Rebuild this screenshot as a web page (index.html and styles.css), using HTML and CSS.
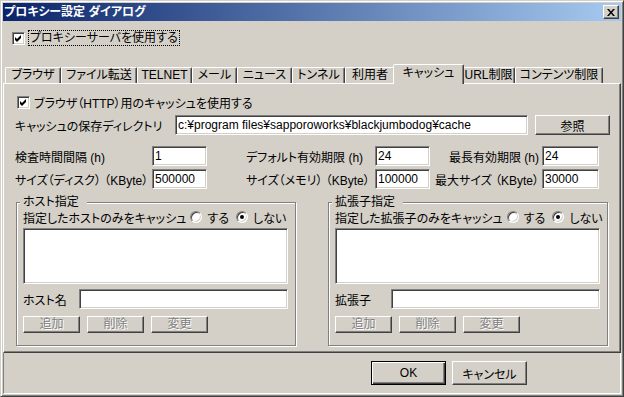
FILE: index.html
```html
<!DOCTYPE html>
<html lang="ja">
<head>
<meta charset="utf-8">
<title>プロキシー設定 ダイアログ</title>
<link rel="stylesheet" href="styles.css">
</head>
<body>
<div class="window">
    <div class="titlebar">
        <span class="title">プロキシー設定 ダイアログ</span>
        <span class="close-btn">
            <svg width="8" height="7" viewBox="0 0 8 7"><path d="M0 0h2l2 2.5L6 0h2L5 3.5 8 7H6L4 4.5 2 7H0l3-3.5z" fill="#000"/></svg>
        </span>
    </div>

    <div class="top-row">
        <span class="check"><svg width="9" height="9" viewBox="0 0 9 9"><polygon points="1,3 3,5 7,1 7,4 3,8 1,6" fill="#000"/></svg></span>
        <span class="focus-label">プロキシーサーバを使用する</span>
    </div>

    <div class="tabs">
        <div class="tab">ブラウザ</div>
        <div class="tab">ファイル転送</div>
        <div class="tab">TELNET</div>
        <div class="tab">メール</div>
        <div class="tab">ニュース</div>
        <div class="tab">トンネル</div>
        <div class="tab">利用者</div>
        <div class="tab active">キャッシュ</div>
        <div class="tab">URL制限</div>
        <div class="tab">コンテンツ制限</div>
    </div>

    <div class="panel">
        <div class="check-row">
            <span class="check"><svg width="9" height="9" viewBox="0 0 9 9"><polygon points="1,3 3,5 7,1 7,4 3,8 1,6" fill="#000"/></svg></span>
            <span>ブラウザ（HTTP）用のキャッシュを使用する</span>
        </div>

        <div class="dir-row">
            <span class="dir-label">キャッシュの保存ディレクトリ</span>
            <input class="field dir-field" type="text" value="c:¥program files¥sapporoworks¥blackjumbodog¥cache">
            <button class="btn btn-browse">参照</button>
        </div>

        <div class="params">
            <span>検査時間間隔 (h)</span>
            <input class="field" type="text" value="1">
            <span></span>
            <span>デフォルト有効期限 (h)</span>
            <input class="field" type="text" value="24">
            <span class="right">最長有効期限 (h)</span>
            <input class="field" type="text" value="24">

            <span>サイズ（ディスク） （KByte）</span>
            <input class="field" type="text" value="500000">
            <span></span>
            <span>サイズ（メモリ） （KByte）</span>
            <input class="field" type="text" value="100000">
            <span class="right">最大サイズ （KByte）</span>
            <input class="field" type="text" value="30000">
        </div>

        <div class="groups">
            <div class="group">
                <div class="group-title">ホスト指定</div>
                <div class="radio-row">
                    <span>指定したホストのみをキャッシュ</span>
                    <span class="radio-item"><span class="radio"></span>する</span>
                    <span class="radio-item"><span class="radio on"></span>しない</span>
                </div>
                <div class="listbox"></div>
                <div class="name-row">
                    <span class="name-label">ホスト名</span>
                    <input class="field name-field" type="text" value="">
                </div>
                <div class="btn-row">
                    <button class="btn small" disabled>追加</button>
                    <button class="btn small" disabled>削除</button>
                    <button class="btn small" disabled>変更</button>
                </div>
            </div>

            <div class="group">
                <div class="group-title">拡張子指定</div>
                <div class="radio-row">
                    <span>指定した拡張子のみをキャッシュ</span>
                    <span class="radio-item"><span class="radio"></span>する</span>
                    <span class="radio-item"><span class="radio on"></span>しない</span>
                </div>
                <div class="listbox"></div>
                <div class="name-row">
                    <span class="name-label">拡張子</span>
                    <input class="field name-field" type="text" value="">
                </div>
                <div class="btn-row">
                    <button class="btn small" disabled>追加</button>
                    <button class="btn small" disabled>削除</button>
                    <button class="btn small" disabled>変更</button>
                </div>
            </div>
        </div>
    </div>

    <div class="footer">
        <button class="btn btn-default">OK</button>
        <button class="btn btn-footer">キャンセル</button>
    </div>
</div>
</body>
</html>
```

FILE: styles.css
```css
* {
    box-sizing: border-box;
}

body {
    margin: 0;
    background: #d4d0c8;
    font-family: "Liberation Sans", "Noto Sans CJK JP", sans-serif;
    font-size: 12px;
    color: #000;
    font-feature-settings: "palt";
}

.window {
    width: 624px;
    height: 397px;
    background: #d4d0c8;
    border: 1px solid;
    border-color: #d4d0c8 #404040 #404040 #d4d0c8;
    box-shadow: inset 1px 1px #fff, inset -1px -1px #808080;
    padding: 2px;
    display: flex;
    flex-direction: column;
}

/* title bar */
.titlebar {
    height: 18px;
    flex: 0 0 auto;
    display: flex;
    align-items: center;
    justify-content: space-between;
    padding: 0 2px 0 1px;
    background: linear-gradient(to right, #0a246a, #a6caf0);
}

.title {
    color: #fff;
    font-weight: bold;
    line-height: 16px;
}

.close-btn {
    width: 16px;
    height: 14px;
    display: flex;
    align-items: center;
    justify-content: center;
    background: #d4d0c8;
    border: 1px solid;
    border-color: #fff #404040 #404040 #fff;
    box-shadow: inset -1px -1px #808080;
}

/* checkbox */
.check {
    width: 13px;
    height: 13px;
    flex: 0 0 auto;
    display: flex;
    align-items: center;
    justify-content: center;
    background: #fff;
    border: 1px solid;
    border-color: #808080 #fff #fff #808080;
    box-shadow: inset 1px 1px #404040, inset -1px -1px #d4d0c8;
}

.top-row {
    height: 16px;
    margin: 9px 0 0 9px;
    display: flex;
    align-items: center;
}

.focus-label {
    margin-left: 3px;
    padding: 0 1px;
    line-height: 14px;
    border: 1px dotted #000;
}

/* tabs */
.tabs {
    height: 19px;
    margin: 18px 0 0 2px;
    display: flex;
    align-items: flex-end;
}

.tab {
    height: 16px;
    line-height: 15px;
    text-align: center;
    white-space: nowrap;
    border: 1px solid;
    border-bottom: none;
    border-color: #fff #404040 transparent #fff;
    border-radius: 2px 2px 0 0;
    box-shadow: inset -1px 0 #808080;
}

.tab:nth-child(1) { width: 56px; }
.tab:nth-child(2) { width: 76px; }
.tab:nth-child(3) { width: 55px; }
.tab:nth-child(4) { width: 45px; }
.tab:nth-child(5) { width: 55px; }
.tab:nth-child(6) { width: 53px; }
.tab:nth-child(7) { width: 50px; }
.tab:nth-child(9) { width: 53px; }
.tab:nth-child(10) { width: 88px; }

.tab.active {
    width: 71px;
    height: 20px;
    line-height: 17px;
    margin: 0 -2px -1px;
    background: #d4d0c8;
    position: relative;
    z-index: 1;
}

/* main panel */
.panel {
    height: 270px;
    flex: 0 0 auto;
    border: 1px solid;
    border-color: #fff #404040 #404040 #fff;
    box-shadow: inset -1px -1px #808080;
    padding: 11px 0 0 11px;
}

.check-row {
    height: 14px;
    margin-left: 2px;
    display: flex;
    align-items: center;
    gap: 4px;
}

.dir-row {
    margin-top: 6px;
    height: 20px;
    display: flex;
    align-items: center;
}

.dir-label {
    width: 160px;
}

.field {
    height: 20px;
    margin: 0;
    padding: 0 2px;
    font: inherit;
    color: #000;
    background: #fff;
    border: 1px solid;
    border-color: #808080 #fff #fff #808080;
    box-shadow: inset 1px 1px #404040, inset -1px -1px #d4d0c8;
    outline: none;
}

.dir-field {
    width: 353px;
}

.btn {
    margin: 0;
    padding: 0;
    font: inherit;
    color: #000;
    background: #d4d0c8;
    border: 1px solid;
    border-color: #fff #404040 #404040 #fff;
    box-shadow: inset -1px -1px #808080;
}

.btn:disabled {
    color: #808080;
    text-shadow: 1px 1px #fff;
}

.btn-browse {
    width: 75px;
    height: 20px;
    margin-left: 7px;
}

.params {
    margin-top: 11px;
    display: grid;
    grid-template-columns: 137px 55px 39px 129px 55px 112px 57px;
    grid-auto-rows: 20px;
    row-gap: 3px;
    align-items: center;
    white-space: nowrap;
}

.params .right {
    text-align: right;
    padding-right: 3px;
}

.params .field {
    width: 100%;
}

/* group boxes */
.groups {
    margin: 13px 0 0 1px;
    display: flex;
    gap: 32px;
}

.group {
    width: 280px;
    height: 144px;
    border: 1px solid #808080;
    box-shadow: inset 1px 1px #fff, 1px 1px #fff;
    padding: 0 7px 0 6px;
}

.group-title {
    width: fit-content;
    margin: -8px 0 0 -3px;
    padding: 0 8px 0 3px;
    line-height: 14px;
    background: #d4d0c8;
}

.radio-row {
    height: 14px;
    margin-top: 1px;
    display: flex;
    align-items: center;
    white-space: nowrap;
}

.radio-item {
    display: flex;
    align-items: center;
    gap: 5px;
    margin-left: 4px;
}

.radio-item + .radio-item {
    margin-left: 7px;
}

.radio {
    width: 12px;
    height: 12px;
    border-radius: 50%;
    background: #fff;
    border: 1px solid;
    border-color: #808080 #fff #fff #808080;
    box-shadow: inset 1px 1px #404040, inset -1px -1px #d4d0c8;
    display: flex;
    align-items: center;
    justify-content: center;
}

.radio.on::after {
    content: "";
    width: 4px;
    height: 4px;
    border-radius: 50%;
    background: #000;
}

.listbox {
    height: 56px;
    margin-top: 4px;
    background: #fff;
    border: 1px solid;
    border-color: #808080 #fff #fff #808080;
    box-shadow: inset 1px 1px #404040, inset -1px -1px #d4d0c8;
}

.name-row {
    margin-top: 5px;
    height: 20px;
    display: flex;
    align-items: center;
}

.name-label {
    width: 56px;
}

.name-field {
    flex: 1;
}

.btn-row {
    margin-top: 7px;
    display: flex;
    gap: 7px;
}

.btn.small {
    width: 57px;
    height: 17px;
    line-height: 13px;
}

/* footer */
.footer {
    flex: 1;
    display: flex;
    align-items: flex-start;
    gap: 6px;
    padding: 8px 0 0 367px;
    border-left: 1px solid #808080;
    border-right: 1px solid #fff;
    border-bottom: 1px solid #fff;
}

.btn-default,
.btn-footer {
    width: 75px;
    height: 24px;
}

.btn-default {
    border-color: #000;
    box-shadow: inset 1px 1px #fff, inset -1px -1px #404040, inset -2px -2px #808080;
}
```
